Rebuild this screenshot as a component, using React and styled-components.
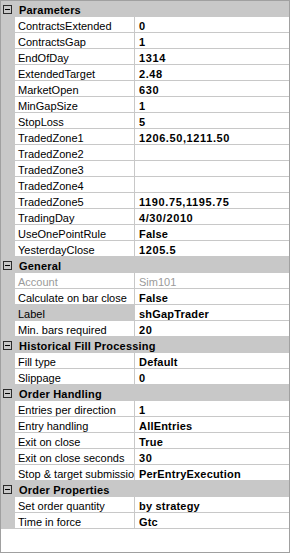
import React from 'react';
import styled, { createGlobalStyle } from 'styled-components';

const ROW_H = '16px';

const GlobalStyle = createGlobalStyle`
  html, body {
    margin: 0;
    padding: 0;
    background: #ffffff;
  }
`;

const Grid = styled.div`
  box-sizing: border-box;
  width: 290px;
  height: 553px;
  border: 1px solid #a0a0a0;
  background: #ffffff;
  font-family: "Liberation Sans", Arial, sans-serif;
  font-size: 11px;
  color: #000000;
  display: flex;
  flex-direction: column;
  overflow: hidden;
`;

const CategoryRow = styled.div`
  box-sizing: border-box;
  display: flex;
  align-items: center;
  height: ${ROW_H};
  flex: none;
  background: #c8c8c8;
`;

const Toggle = styled.span`
  box-sizing: border-box;
  width: 9px;
  height: 9px;
  margin: 0 7px 0 2px;
  border: 1px solid #2b2b2b;
  position: relative;
  flex: none;
  &::after {
    content: '';
    position: absolute;
    left: 1px;
    right: 1px;
    top: 3px;
    height: 1px;
    background: #000000;
  }
`;

const CategoryTitle = styled.span`
  font-weight: bold;
  letter-spacing: 0.2px;
  white-space: nowrap;
  padding-top: 2px;
`;

const PropRow = styled.div`
  display: grid;
  grid-template-columns: 14px 120px 1fr;
  height: ${ROW_H};
  flex: none;
`;

const Gutter = styled.div`
  background: #c8c8c8;
`;

const Cell = styled.div`
  box-sizing: border-box;
  display: flex;
  align-items: center;
  min-width: 0;
  padding-top: 3px;
  overflow: hidden;
  white-space: nowrap;
  border-bottom: 1px solid #c8c8c8;
`;

const NameCell = styled(Cell)`
  padding-left: 3px;
  border-right: 1px solid #c8c8c8;
  background: ${p => (p.$selected ? '#c8c8c8' : '#ffffff')};
  color: ${p => (p.$disabled ? '#9a9a9a' : '#000000')};
`;

const ValueCell = styled(Cell)`
  padding-left: 4px;
  font-weight: ${p => (p.$disabled ? 'normal' : 'bold')};
  color: ${p => (p.$disabled ? '#9a9a9a' : '#000000')};
  letter-spacing: ${p => (p.$disabled ? '0' : p.$numeric ? '0.6px' : '0.2px')};
`;

const sections = [
  {
    title: 'Parameters',
    rows: [
      ['ContractsExtended', '0'],
      ['ContractsGap', '1'],
      ['EndOfDay', '1314'],
      ['ExtendedTarget', '2.48'],
      ['MarketOpen', '630'],
      ['MinGapSize', '1'],
      ['StopLoss', '5'],
      ['TradedZone1', '1206.50,1211.50'],
      ['TradedZone2', ''],
      ['TradedZone3', ''],
      ['TradedZone4', ''],
      ['TradedZone5', '1190.75,1195.75'],
      ['TradingDay', '4/30/2010'],
      ['UseOnePointRule', 'False'],
      ['YesterdayClose', '1205.5'],
    ],
  },
  {
    title: 'General',
    rows: [
      ['Account', 'Sim101', { disabled: true }],
      ['Calculate on bar close', 'False'],
      ['Label', 'shGapTrader', { selected: true }],
      ['Min. bars required', '20'],
    ],
  },
  {
    title: 'Historical Fill Processing',
    rows: [
      ['Fill type', 'Default'],
      ['Slippage', '0'],
    ],
  },
  {
    title: 'Order Handling',
    rows: [
      ['Entries per direction', '1'],
      ['Entry handling', 'AllEntries'],
      ['Exit on close', 'True'],
      ['Exit on close seconds', '30'],
      ['Stop & target submission', 'PerEntryExecution'],
    ],
  },
  {
    title: 'Order Properties',
    rows: [
      ['Set order quantity', 'by strategy'],
      ['Time in force', 'Gtc'],
    ],
  },
];

const isNumeric = v => /^[\d.,/]+$/.test(v);

const Category = ({ title, rows }) => (
  <>
    <CategoryRow>
      <Toggle />
      <CategoryTitle>{title}</CategoryTitle>
    </CategoryRow>
    {rows.map(([name, value, flags = {}]) => (
      <PropRow key={name}>
        <Gutter />
        <NameCell $selected={flags.selected} $disabled={flags.disabled}>{name}</NameCell>
        <ValueCell $disabled={flags.disabled} $numeric={isNumeric(value)}>{value}</ValueCell>
      </PropRow>
    ))}
  </>
);

export default function App() {
  return (
    <>
      <GlobalStyle />
      <Grid>
        {sections.map(s => (
          <Category key={s.title} title={s.title} rows={s.rows} />
        ))}
      </Grid>
    </>
  );
}
